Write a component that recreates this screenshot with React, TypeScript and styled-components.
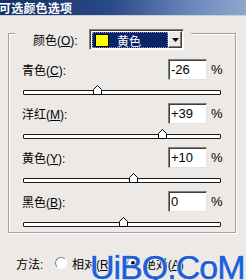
import React from 'react';
import styled, { createGlobalStyle } from 'styled-components';

const GlobalStyle = createGlobalStyle`
  html, body {
    margin: 0;
    padding: 0;
    background: #ece9e6;
  }
  body {
    font-family: "Liberation Sans", "Noto Sans CJK SC", sans-serif;
    color: #000;
  }
`;

const Window = styled.div`
  width: 246px;
  height: 280px;
  position: relative;
  overflow: hidden;
  background: #ece9e6;
`;

const TitleBar = styled.div`
  height: 15px;
  background: linear-gradient(90deg, #142f66 0%, #2a4a86 45%, #6f8cc0 80%, #8fa6cc 100%);
  display: flex;
  align-items: center;
  border-bottom: 1px solid #c9d0dc;
`;

const TitleText = styled.span`
  color: #fff;
  font-weight: 700;
  font-size: 12px;
  margin-left: -1px;
  letter-spacing: 0.2px;
`;

const Body = styled.div`
  padding: 17px 0 0 8px;
`;

const GroupBox = styled.div`
  position: relative;
  box-sizing: border-box;
  width: 228px;
  height: 200px;
  border: 1px solid #a09fa4;
  box-shadow: inset 1px 1px 0 #fff, 1px 1px 0 #fff;
  padding: 25px 0 0 13px;
`;

const Legend = styled.div`
  position: absolute;
  top: -5px;
  left: 6px;
  height: 21px;
  display: flex;
  align-items: center;
  padding: 0 7px 0 18px;
  background: #ece9e6;
`;

const LegendLabel = styled.span`
  width: 56px;
  font-size: 12px;
`;

const Combo = styled.div`
  box-sizing: border-box;
  width: 95px;
  height: 21px;
  display: flex;
  background: #fff;
  border: 1px solid;
  border-color: #808080 #fff #fff #808080;
  box-shadow: inset 1px 1px 0 #404040;
  padding: 2px 1px 1px 2px;
`;

const ComboValue = styled.div`
  flex: 1;
  display: flex;
  align-items: center;
  background: #0a246a;
  color: #fff;
  font-size: 12px;
  outline: 1px dotted #8a94c0;
  outline-offset: -1px;
`;

const Swatch = styled.span<{ $color: string }>`
  width: 12px;
  height: 11px;
  margin: 0 8px 0 3px;
  background: ${p => p.$color};
  border: 1px solid #000;
`;

const ComboButton = styled.div`
  box-sizing: border-box;
  width: 14px;
  margin-top: -1px;
  display: flex;
  align-items: center;
  justify-content: center;
  background: #ece9e6;
  border: 1px solid;
  border-color: #fff #404040 #404040 #fff;
  box-shadow: inset -1px -1px 0 #808080;
`;

const Block = styled.div`
  height: 44px;
`;

const Row = styled.div`
  height: 21px;
  display: flex;
  align-items: center;
`;

const Label = styled.span`
  width: 146px;
  font-size: 12px;
`;

const ValueBox = styled.div`
  box-sizing: border-box;
  width: 39px;
  height: 21px;
  background: #fff;
  border: 1px solid;
  border-color: #808080 #e4e2de #e4e2de #808080;
  box-shadow: inset 1px 1px 0 #404040;
  padding-left: 2px;
  font-size: 13px;
  line-height: 19px;
`;

const Percent = styled.span`
  margin-left: 4px;
  font-size: 13px;
`;

const Track = styled.div`
  position: relative;
  box-sizing: border-box;
  width: 198px;
  height: 5px;
  margin: 10px 0 0 1px;
  background: #fff;
  border: 1px solid #1a1a1a;
  border-radius: 1px;
`;

const Thumb = styled.svg`
  position: absolute;
  bottom: -1px;
  width: 9px;
  height: 10px;
`;

const MethodRow = styled.div`
  margin: 22px 0 0 8px;
  height: 16px;
  display: flex;
  align-items: center;
  font-size: 12px;
`;

const MethodLabel = styled.span`
  width: 39px;
`;

const Radio = styled.span<{ $checked?: boolean }>`
  box-sizing: border-box;
  width: 12px;
  height: 12px;
  border-radius: 50%;
  background: #fff;
  border: 1px solid;
  border-color: #808080 #fff #fff #808080;
  margin-right: 5px;
  display: flex;
  align-items: center;
  justify-content: center;
  &::after {
    content: '';
    width: 4px;
    height: 4px;
    border-radius: 50%;
    background: ${p => (p.$checked ? '#000' : 'transparent')};
  }
`;

const RadioText = styled.span`
  margin-right: 14px;
`;

const Watermark = styled.div`
  position: absolute;
  left: 90px;
  top: 250px;
  font-family: "Liberation Sans", sans-serif;
  font-size: 34px;
  line-height: 34px;
  letter-spacing: -1px;
  color: #1f5fd6;
  -webkit-text-stroke: 0.6px #1f5fd6;
  text-shadow: 1px 0 0 #fff, -1px 0 0 #fff, 0 1px 0 #fff, 0 -1px 0 #fff;
  white-space: nowrap;
`;

const channels = [
  { name: '青色', key: 'C', value: -26 },
  { name: '洋红', key: 'M', value: 39 },
  { name: '黄色', key: 'Y', value: 10 },
  { name: '黑色', key: 'B', value: 0 },
];

const fmt = (v: number) => (v > 0 ? `+${v}` : `${v}`);

// track inner edge sits at x=24; value 0 puts the thumb centre at x=123
const thumbLeft = (v: number) => 99 + v - 4.5;

const App: React.FC = () => (
  <Window>
    <GlobalStyle />
    <TitleBar>
      <TitleText>可选颜色选项</TitleText>
    </TitleBar>
    <Body>
      <GroupBox>
        <Legend>
          <LegendLabel>颜色(<u>O</u>):</LegendLabel>
          <Combo>
            <ComboValue>
              <Swatch $color="#ffff00" />
              黄色
            </ComboValue>
            <ComboButton>
              <svg width="7" height="4" viewBox="0 0 7 4">
                <path d="M0 0h7L3.5 4z" fill="#000" />
              </svg>
            </ComboButton>
          </Combo>
        </Legend>
        {channels.map(c => (
          <Block key={c.key}>
            <Row>
              <Label>
                {c.name}(<u>{c.key}</u>):
              </Label>
              <ValueBox>{fmt(c.value)}</ValueBox>
              <Percent>%</Percent>
            </Row>
            <Track>
              <Thumb viewBox="0 0 9 10" style={{ left: thumbLeft(c.value) }}>
                <path d="M0.5 9.5V4.5L4.5 0.5L8.5 4.5V9.5Z" fill="#fff" stroke="#000" />
              </Thumb>
            </Track>
          </Block>
        ))}
      </GroupBox>
      <MethodRow>
        <MethodLabel>方法:</MethodLabel>
        <Radio />
        <RadioText>相对(<u>R</u>)</RadioText>
        <Radio $checked />
        <RadioText>绝对(<u>A</u>)</RadioText>
      </MethodRow>
    </Body>
    <Watermark>UiBQ.CoM</Watermark>
  </Window>
);

export default App;
